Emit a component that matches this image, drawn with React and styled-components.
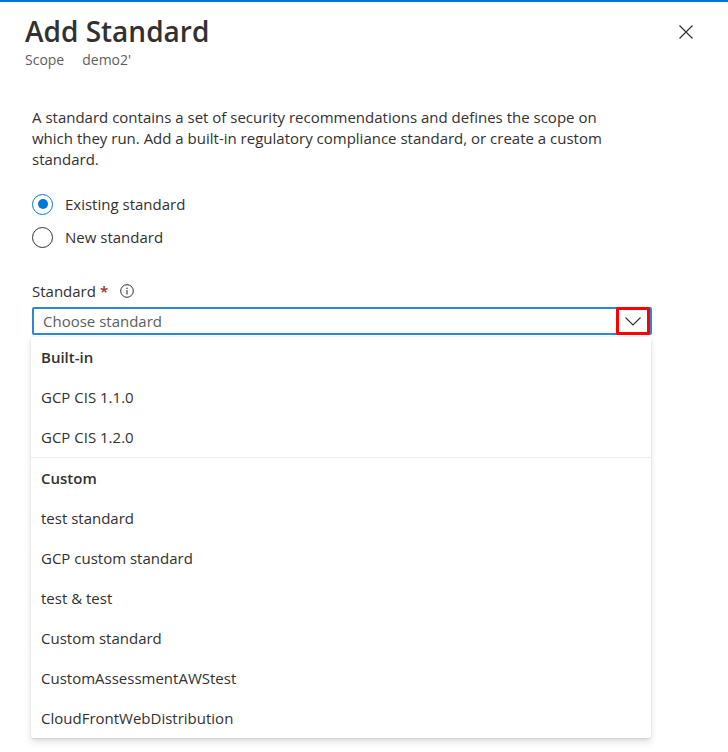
import React from 'react';
import styled, { createGlobalStyle } from 'styled-components';

const GlobalStyle = createGlobalStyle`
  html, body {
    margin: 0;
    padding: 0;
    background: #ffffff;
  }
  body {
    font-family: "Segoe UI", "Open Sans", "Liberation Sans", sans-serif;
    color: #323130;
  }
`;

const Panel = styled.div`
  width: 728px;
  height: 752px;
  border-top: 2px solid #0078d4;
  box-sizing: border-box;
  overflow: hidden;
`;

const Header = styled.div`
  display: flex;
  justify-content: space-between;
  align-items: flex-start;
  padding: 11px 34px 0 25px;
`;

const Title = styled.h1`
  margin: 0;
  font-size: 28px;
  line-height: 36px;
  font-weight: 600;
  color: #323130;
`;

const Subtitle = styled.div`
  display: flex;
  gap: 18px;
  margin-top: 2px;
  font-size: 14px;
  line-height: 18px;
  color: #605e5c;
`;

const CloseButton = styled.button`
  border: 0;
  background: transparent;
  padding: 0;
  margin-top: 11px;
  width: 16px;
  height: 16px;
  display: flex;
  align-items: center;
  justify-content: center;
  cursor: pointer;
`;

const Content = styled.div`
  padding: 38px 0 0 32px;
  width: 620px;
`;

const Description = styled.p`
  margin: 0;
  font-size: 15px;
  line-height: 21px;
  color: #323130;
`;

const RadioGroup = styled.div`
  display: flex;
  flex-direction: column;
  gap: 11px;
  margin-top: 23px;
`;

const RadioRow = styled.label`
  display: flex;
  align-items: center;
  gap: 12px;
  font-size: 15px;
  line-height: 22px;
  color: #323130;
`;

const RadioCircle = styled.span`
  width: 21px;
  height: 21px;
  border-radius: 50%;
  box-sizing: border-box;
  border: 1px solid ${p => (p.$checked ? '#0078d4' : '#323130')};
  display: flex;
  align-items: center;
  justify-content: center;
  &::after {
    content: '';
    width: 10px;
    height: 10px;
    border-radius: 50%;
    background: ${p => (p.$checked ? '#0078d4' : 'transparent')};
  }
`;

const FieldLabel = styled.div`
  display: flex;
  align-items: center;
  margin-top: 33px;
  font-size: 15px;
  line-height: 20px;
  color: #323130;
`;

const Required = styled.span`
  color: #a4262c;
  margin-left: 4px;
  font-weight: 600;
`;

const InfoIcon = styled.span`
  margin-left: 12px;
  display: flex;
`;

const DropdownWrap = styled.div`
  position: relative;
  margin-top: 6px;
`;

const Select = styled.div`
  height: 28px;
  box-sizing: border-box;
  border: 2px solid #2b88d8;
  border-radius: 2px;
  display: flex;
  align-items: center;
  padding-left: 9px;
  font-size: 15px;
  color: #605e5c;
`;

const Chevron = styled.span`
  position: absolute;
  right: 2px;
  top: 0;
  width: 34px;
  height: 28px;
  box-sizing: border-box;
  border: 3px solid #ff0000;
  border-radius: 2px;
  background: #ffffff;
  display: flex;
  align-items: center;
  justify-content: center;
`;

const Menu = styled.div`
  position: absolute;
  left: -1px;
  top: 30px;
  width: 620px;
  background: #ffffff;
  border-radius: 2px;
  box-shadow: 0 3.2px 7.2px rgba(0, 0, 0, 0.12), 0 0.6px 1.8px rgba(0, 0, 0, 0.1);
`;

const GroupHeader = styled.div`
  height: 40px;
  display: flex;
  align-items: center;
  padding-left: 10px;
  font-size: 15px;
  font-weight: 600;
  color: #323130;
`;

const Option = styled.div`
  height: 40px;
  display: flex;
  align-items: center;
  padding-left: 10px;
  font-size: 15px;
  color: #323130;
`;

const Divider = styled.div`
  height: 1px;
  background: #edebe9;
`;

const groups = [
  { title: 'Built-in', items: ['GCP CIS 1.1.0', 'GCP CIS 1.2.0'] },
  {
    title: 'Custom',
    items: [
      'test standard',
      'GCP custom standard',
      'test & test',
      'Custom standard',
      'CustomAssessmentAWStest',
      'CloudFrontWebDistribution',
    ],
  },
];

const App = () => {
  return (
    <Panel>
      <GlobalStyle />
      <Header>
        <div>
          <Title>Add Standard</Title>
          <Subtitle>
            <span>Scope</span>
            <span>demo2'</span>
          </Subtitle>
        </div>
        <CloseButton aria-label="Close">
          <svg width="14" height="14" viewBox="0 0 14 14">
            <path d="M0.5 0.5 L13.5 13.5 M13.5 0.5 L0.5 13.5" stroke="#323130" strokeWidth="1.2" fill="none" />
          </svg>
        </CloseButton>
      </Header>

      <Content>
        <Description>
          A standard contains a set of security recommendations and defines the scope on
          <br />
          which they run. Add a built-in regulatory compliance standard, or create a custom
          <br />
          standard.
        </Description>

        <RadioGroup>
          <RadioRow>
            <RadioCircle $checked />
            Existing standard
          </RadioRow>
          <RadioRow>
            <RadioCircle />
            New standard
          </RadioRow>
        </RadioGroup>

        <FieldLabel>
          Standard<Required>*</Required>
          <InfoIcon>
            <svg width="14" height="14" viewBox="0 0 14 14">
              <circle cx="7" cy="7" r="6.3" stroke="#323130" strokeWidth="1" fill="none" />
              <circle cx="7" cy="4.2" r="0.8" fill="#323130" />
              <path d="M7 6 V10.5" stroke="#323130" strokeWidth="1.1" />
            </svg>
          </InfoIcon>
        </FieldLabel>

        <DropdownWrap>
          <Select>Choose standard</Select>
          <Chevron>
            <svg width="16" height="9" viewBox="0 0 16 9">
              <path d="M0.5 0.5 L8 8 L15.5 0.5" stroke="#323130" strokeWidth="1.1" fill="none" />
            </svg>
          </Chevron>
          <Menu>
            {groups.map((group, i) => (
              <div key={group.title}>
                {i > 0 && <Divider />}
                <GroupHeader>{group.title}</GroupHeader>
                {group.items.map(item => (
                  <Option key={item}>{item}</Option>
                ))}
              </div>
            ))}
          </Menu>
        </DropdownWrap>
      </Content>
    </Panel>
  );
};

export default App;
